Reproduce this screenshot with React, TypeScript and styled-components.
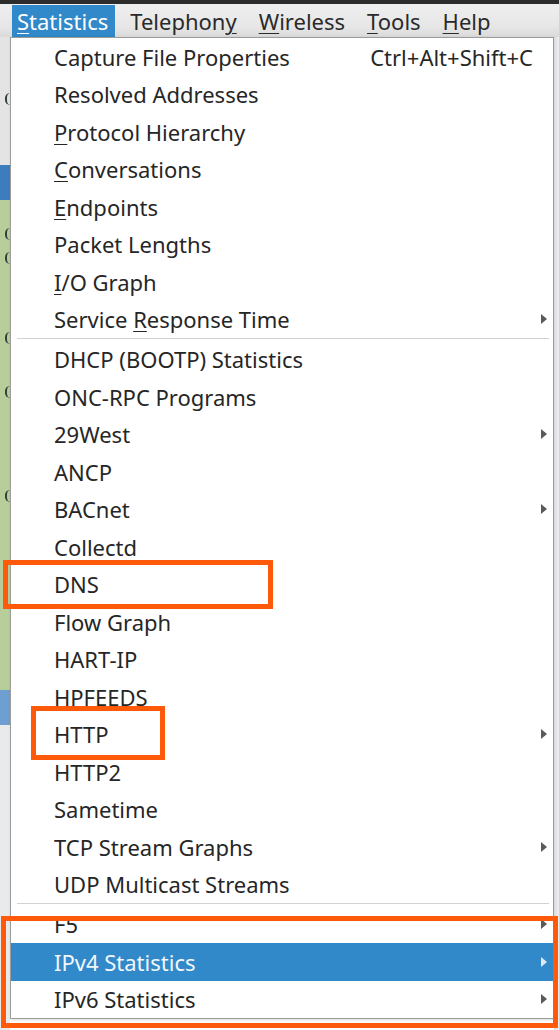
import React from "react";
import styled, { createGlobalStyle } from "styled-components";

const GlobalStyle = createGlobalStyle`
  html, body { margin: 0; padding: 0; background: #ffffff; }
  body { font-family: "Noto Sans", "DejaVu Sans", sans-serif; }
  #root { width: 559px; height: 1030px; overflow: hidden; }
`;

const FONT = `"Noto Sans", "DejaVu Sans", sans-serif`;

const Screen = styled.div`
  position: relative;
  width: 559px;
  height: 1030px;
  display: flex;
  flex-direction: column;
  background: #ffffff;
  overflow: hidden;
  font-family: ${FONT};
`;

const TitleStrip = styled.div`
  height: 4px;
  background: #2c2c2c;
  flex: none;
`;

const MenuBar = styled.div`
  height: 33px;
  flex: none;
  display: flex;
  align-items: stretch;
  padding-left: 12px;
  gap: 10px;
  background: linear-gradient(#efefef, #e6e6e6 70%, #dadada);
`;

const MenuTitle = styled.div<{ $active?: boolean }>`
  display: flex;
  align-items: center;
  padding: 0 7px 0 5px;
  font-size: 22px;
  color: ${(p) => (p.$active ? "#ffffff" : "#2a2a2a")};
  background: ${(p) => (p.$active ? "#3189c9" : "transparent")};
  margin-top: 1px;
`;

const Mn = styled.span`
  text-decoration: underline;
  text-decoration-thickness: 1px;
  text-underline-offset: 3px;
`;

const Body = styled.div`
  flex: 1;
  display: flex;
  align-items: flex-start;
`;

const LeftStrip = styled.div`
  width: 10px;
  flex: none;
  display: flex;
  flex-direction: column;
  align-self: stretch;
`;

const StripSeg = styled.div<{ $h: number; $bg: string }>`
  height: ${(p) => p.$h}px;
  background: ${(p) => p.$bg};
  display: flex;
  flex-direction: column;
  align-items: flex-end;
`;

const StripMark = styled.div<{ $gap: number }>`
  margin-top: ${(p) => p.$gap}px;
  width: 3px;
  height: 12px;
  border-left: 2px solid #33403a;
  border-radius: 6px 0 0 6px;
`;

const RightStrip = styled.div`
  width: 5px;
  flex: none;
  align-self: stretch;
  background: linear-gradient(90deg, #d8dadd, #eef0f2);
`;

const Popup = styled.div`
  width: 544px;
  flex: none;
  box-sizing: border-box;
  border: 1px solid #9c9c9c;
  background: #ffffff;
  display: flex;
  flex-direction: column;
  box-shadow: 1px 1px 3px rgba(0, 0, 0, 0.15);
`;

const Row = styled.div<{ $active?: boolean }>`
  height: 37.5px;
  display: grid;
  grid-template-columns: 1fr auto 7px;
  column-gap: 8px;
  align-items: center;
  padding: 0 5px 0 43px;
  font-size: 22px;
  color: ${(p) => (p.$active ? "#f2f7fc" : "#262626")};
  background: ${(p) => (p.$active ? "#3189c9" : "transparent")};
  white-space: nowrap;
`;

const Label = styled.span``;

const Shortcut = styled.span`
  text-align: right;
`;

const Arrow = styled.span<{ $active?: boolean }>`
  width: 0;
  height: 0;
  border-top: 5px solid transparent;
  border-bottom: 5px solid transparent;
  border-left: 6px solid ${(p) => (p.$active ? "#dfe9f3" : "#5a5a5a")};
  justify-self: start;
`;

const Separator = styled.div`
  height: 2.5px;
  margin: 0 4px 0 6px;
  border-top: 1.5px solid #d2d2d2;
  box-sizing: border-box;
`;

const Highlight = styled.div<{ $x: number; $y: number; $w: number; $h: number }>`
  position: absolute;
  left: ${(p) => p.$x}px;
  top: ${(p) => p.$y}px;
  width: ${(p) => p.$w}px;
  height: ${(p) => p.$h}px;
  box-sizing: border-box;
  border: 5px solid #ff5a0a;
  pointer-events: none;
`;

type Item =
  | { sep: true }
  | { sep?: false; label: string; mn?: number; sub?: boolean; shortcut?: string; active?: boolean };

const items: Item[] = [
  { label: "Capture File Properties", shortcut: "Ctrl+Alt+Shift+C" },
  { label: "Resolved Addresses" },
  { label: "Protocol Hierarchy", mn: 0 },
  { label: "Conversations", mn: 0 },
  { label: "Endpoints", mn: 0 },
  { label: "Packet Lengths" },
  { label: "I/O Graph", mn: 0 },
  { label: "Service Response Time", mn: 8, sub: true },
  { sep: true },
  { label: "DHCP (BOOTP) Statistics" },
  { label: "ONC-RPC Programs" },
  { label: "29West", sub: true },
  { label: "ANCP" },
  { label: "BACnet", sub: true },
  { label: "Collectd" },
  { label: "DNS" },
  { label: "Flow Graph" },
  { label: "HART-IP" },
  { label: "HPFEEDS" },
  { label: "HTTP", sub: true },
  { label: "HTTP2" },
  { label: "Sametime" },
  { label: "TCP Stream Graphs", sub: true },
  { label: "UDP Multicast Streams" },
  { sep: true },
  { label: "F5", sub: true },
  { label: "IPv4 Statistics", sub: true, active: true },
  { label: "IPv6 Statistics", sub: true },
];

const menus: { label: string; mn: number; active?: boolean }[] = [
  { label: "Statistics", mn: 0, active: true },
  { label: "Telephony", mn: 8 },
  { label: "Wireless", mn: 0 },
  { label: "Tools", mn: 0 },
  { label: "Help", mn: 0 },
];

const strip: { h: number; bg: string; marks?: number[] }[] = [
  { h: 128, bg: "#e4e4e4", marks: [56] },
  { h: 35, bg: "#3d7dbf" },
  { h: 490, bg: "#b7ce9b", marks: [28, 12, 68, 42, 92] },
  { h: 35, bg: "#6f9fd2" },
  { h: 305, bg: "#e9eaeb" },
];

function withMnemonic(text: string, idx?: number) {
  if (idx === undefined) return text;
  return (
    <>
      {text.slice(0, idx)}
      <Mn>{text[idx]}</Mn>
      {text.slice(idx + 1)}
    </>
  );
}

export default function App() {
  return (
    <>
      <GlobalStyle />
      <Screen>
        <TitleStrip />
        <MenuBar>
          {menus.map((m) => (
            <MenuTitle key={m.label} $active={m.active}>
              <span>{withMnemonic(m.label, m.mn)}</span>
            </MenuTitle>
          ))}
        </MenuBar>
        <Body>
          <LeftStrip>
            {strip.map((s, i) => (
              <StripSeg key={i} $h={s.h} $bg={s.bg}>
                {(s.marks || []).map((g, j) => (
                  <StripMark key={j} $gap={g} />
                ))}
              </StripSeg>
            ))}
          </LeftStrip>
          <Popup>
            {items.map((it, i) =>
              it.sep ? (
                <Separator key={i} />
              ) : (
                <Row key={i} $active={it.active}>
                  <Label>{withMnemonic(it.label, it.mn)}</Label>
                  <Shortcut>{it.shortcut || ""}</Shortcut>
                  {it.sub ? <Arrow $active={it.active} /> : <span />}
                </Row>
              )
            )}
          </Popup>
          <RightStrip />
        </Body>
        <Highlight $x={3} $y={560} $w={270} $h={49} />
        <Highlight $x={31} $y={706} $w={134} $h={54} />
        <Highlight $x={1} $y={916} $w={557} $h={112} />
      </Screen>
    </>
  );
}
